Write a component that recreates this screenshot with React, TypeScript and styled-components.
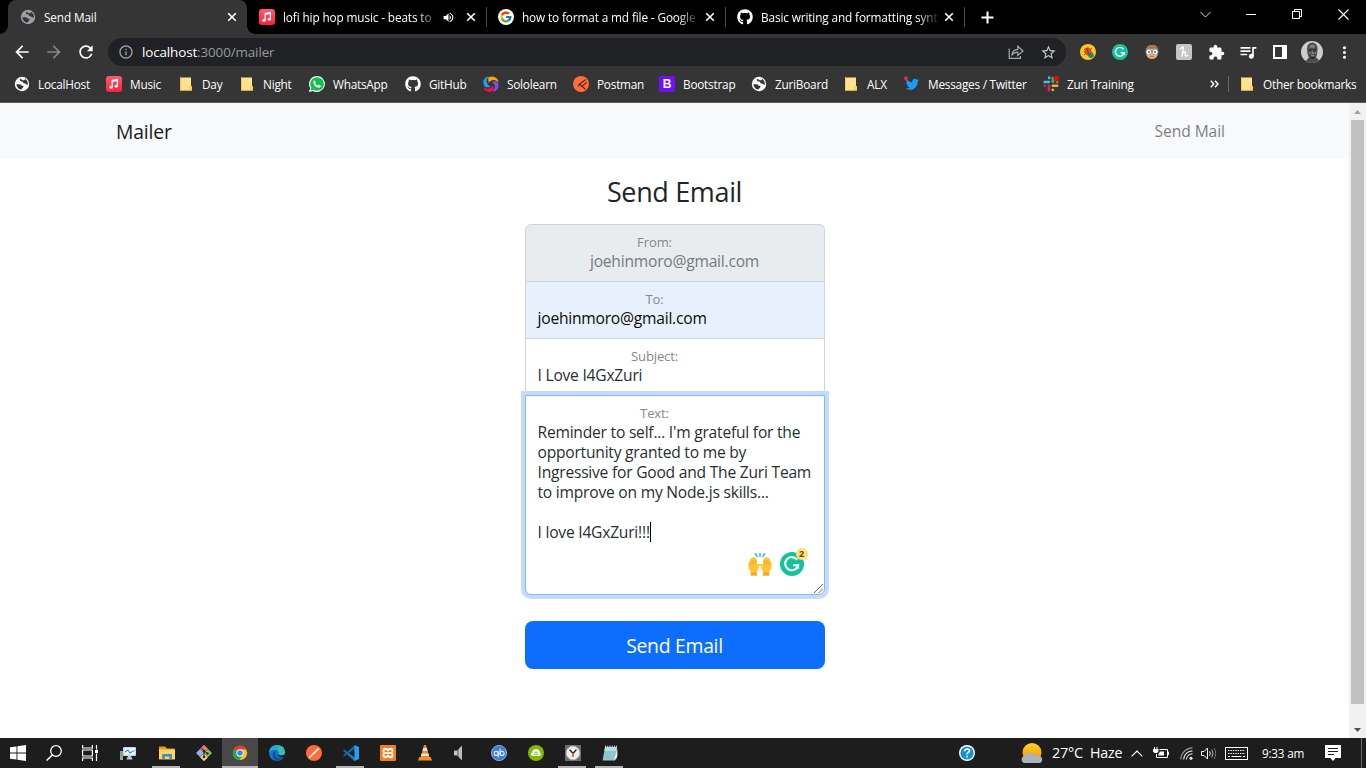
import React from 'react';
import styled, { createGlobalStyle } from 'styled-components';
import { FaGithub, FaTwitter } from 'react-icons/fa';
import { FcGoogle } from 'react-icons/fc';
import {
  MdArrowBack, MdArrowForward, MdRefresh, MdInfoOutline, MdStarBorder, MdExtension,
  MdQueueMusic, MdMoreVert, MdVolumeUp,
} from 'react-icons/md';

const Global = createGlobalStyle`
  * { box-sizing: border-box; }
  html, body { margin: 0; padding: 0; overflow: hidden; background: #fff; }
  body { font-family: "Open Sans", "Noto Sans", sans-serif; }
  svg { display: block; flex: none; }
`;

const Screen = styled.div`
  width: 1366px;
  height: 768px;
  display: flex;
  flex-direction: column;
  overflow: hidden;
`;

/* ---------- browser chrome ---------- */

const TabStrip = styled.div`
  height: 34px;
  flex: none;
  display: flex;
  align-items: stretch;
  background: #000;
  padding-left: 8px;
`;

const Tab = styled.div<{ $active?: boolean; $line?: boolean }>`
  width: 239px;
  display: flex;
  align-items: center;
  padding-left: 12px;
  position: relative;
  color: #fff;
  background: ${p => (p.$active ? '#353535' : 'transparent')};
  border-radius: 8px 8px 0 0;
  ${p => p.$active && `
    &::before, &::after {
      content: '';
      position: absolute;
      bottom: 0;
      width: 8px;
      height: 8px;
    }
    &::before { left: -8px; background: radial-gradient(circle at 0 0, transparent 7.5px, #353535 8px); }
    &::after { right: -8px; background: radial-gradient(circle at 100% 0, transparent 7.5px, #353535 8px); }
  `}
  ${p => p.$line && `
    &::after {
      content: '';
      position: absolute;
      right: -1px;
      top: 7px;
      width: 1px;
      height: 20px;
      background: #4a4a4a;
    }
  `}
`;

const TabTitle = styled.span<{ $w: number; $fade?: boolean }>`
  width: ${p => p.$w}px;
  flex: none;
  margin-left: 8px;
  font-size: 11.8px;
  letter-spacing: -0.13px;
  line-height: 18px;
  white-space: nowrap;
  ${p => p.$fade && 'mask-image: linear-gradient(90deg, #000 calc(100% - 22px), transparent);'}
`;

const TabEnd = styled.span`
  display: flex;
  margin-left: auto;
  margin-right: 10px;
  align-items: center;
  gap: 11px;
`;

const NewTab = styled.div`
  width: 46px;
  display: flex;
  align-items: center;
  justify-content: center;
`;

const WindowButtons = styled.div`
  margin-left: auto;
  display: flex;
  height: 28px;
`;

const WindowButton = styled.div`
  width: 46px;
  display: flex;
  align-items: center;
  justify-content: center;
`;

const Toolbar = styled.div`
  height: 36px;
  flex: none;
  display: flex;
  align-items: center;
  background: #353535;
  color: #fff;
  padding-left: 6px;
`;

const ToolButton = styled.div<{ $dim?: boolean }>`
  width: 32px;
  display: flex;
  justify-content: center;
  color: ${p => (p.$dim ? '#868686' : '#fff')};
`;

const Omnibox = styled.div`
  width: 958px;
  height: 28px;
  margin-left: 6px;
  margin-right: 6px;
  border-radius: 14px;
  background: #202124;
  display: flex;
  align-items: center;
  padding: 0 2px;
  color: #9aa0a6;
`;

const Address = styled.span`
  flex: 1;
  font-size: 13.4px;
  line-height: 20px;
  letter-spacing: -0.11px;
  color: #96999d;
  b { font-weight: 400; color: #fff; }
`;

const Bookmarks = styled.div`
  height: 33px;
  flex: none;
  display: flex;
  align-items: center;
  background: #353535;
  border-bottom: 1px solid #5c5c5c;
  padding-left: 14px;
  padding-bottom: 4px;
  color: #fff;
`;

const Bookmark = styled.div<{ $w: number }>`
  width: ${p => p.$w}px;
  flex: none;
  display: flex;
  align-items: center;
  gap: 8px;
  font-size: 11.8px;
  letter-spacing: -0.23px;
  line-height: 18px;
  white-space: nowrap;
`;

const Overflow = styled.div`
  margin-left: auto;
  display: flex;
  align-items: center;
`;

const Divider = styled.div`
  width: 1px;
  height: 16px;
  margin: 0 10px 0 9px;
  background: #666;
`;

/* ---------- page ---------- */

const Viewport = styled.div`
  flex: 1;
  display: flex;
  min-height: 0;
`;

const Page = styled.main`
  width: 1349px;
  background: #fff;
  display: flex;
  flex-direction: column;
  align-items: center;
`;

const Navbar = styled.nav`
  width: 100%;
  height: 56px;
  flex: none;
  display: flex;
  align-items: center;
  justify-content: space-between;
  padding: 0 124px 0 116px;
  background: #f8f9fb;
`;

const Brand = styled.span`
  font-size: 19.4px;
  line-height: 30px;
  padding-top: 1px;
  letter-spacing: -0.2px;
  color: #1b1c1d;
`;

const NavLink = styled.span`
  font-size: 15.6px;
  line-height: 24px;
  letter-spacing: -0.05px;
  color: #808182;
`;

const Title = styled.h1`
  margin: 16px 0 0;
  height: 34px;
  font-size: 27px;
  letter-spacing: -0.35px;
  font-weight: 400;
  line-height: 33px;
  color: #212529;
`;

const Form = styled.form`
  width: 300px;
  margin-top: 15px;
  display: flex;
  flex-direction: column;
`;

const Field = styled.label<{ $bg?: string; $first?: boolean }>`
  height: 58px;
  margin-bottom: -1px;
  display: flex;
  flex-direction: column;
  border: 1px solid #ced4da;
  border-radius: ${p => (p.$first ? '6px 6px 0 0' : '0')};
  background: ${p => p.$bg ?? '#fff'};
  padding: 8px 12px 0;
`;

const FieldName = styled.span`
  display: block;
  width: 100%;
  padding-right: 40px;
  text-align: center;
  font-size: 13.1px;
  letter-spacing: -0.15px;
  line-height: 18px;
  color: #85888b;
`;

const Value = styled.span<{ $color?: string; $center?: boolean }>`
  font-size: 15.6px;
  line-height: 20px;
  text-align: ${p => (p.$center ? 'center' : 'left')};
  letter-spacing: -0.22px;
  white-space: nowrap;
  color: ${p => p.$color ?? '#2a2e32'};
`;

const TextArea = styled.div`
  position: relative;
  height: 200px;
  padding: 8px 12px 0;
  display: flex;
  flex-direction: column;
  background: #fff;
  border: 1px solid #86b7fe;
  border-radius: 0 0 6px 6px;
  box-shadow: 0 0 0 4px #c2dbff;
`;

const Caret = styled.i`
  display: inline-block;
  width: 1px;
  height: 20px;
  background: #000;
  vertical-align: top;
`;

const Assist = styled.div`
  position: absolute;
  right: 20px;
  bottom: 18px;
  display: flex;
  gap: 8px;
`;

const Grip = styled.div`
  position: absolute;
  right: 1px;
  bottom: 1px;
`;

const Submit = styled.button`
  margin-top: 26px;
  height: 48px;
  border: 0;
  border-radius: 8px;
  background: #0d6efd;
  color: #fff;
  font-family: inherit;
  font-size: 19.4px;
  letter-spacing: -0.3px;
  line-height: 30px;
  padding: 1px 0 0;
`;

const Scrollbar = styled.div`
  width: 17px;
  display: flex;
  flex-direction: column;
  align-items: center;
  background: #f1f1f1;
`;

const ScrollArrow = styled.div`
  height: 17px;
  display: flex;
  align-items: center;
`;

const Thumb = styled.div`
  width: 13px;
  height: 584px;
  margin-bottom: auto;
  background: #c1c1c1;
`;

/* ---------- taskbar ---------- */

const Taskbar = styled.div`
  height: 30px;
  flex: none;
  display: flex;
  align-items: stretch;
  background: #1d1d1d;
  color: #fff;
`;

const Task = styled.div<{ $w?: number; $open?: boolean; $active?: boolean }>`
  width: ${p => p.$w ?? 37}px;
  display: flex;
  align-items: center;
  justify-content: center;
  position: relative;
  background: ${p => (p.$active ? '#484848' : 'transparent')};
  ${p => (p.$open || p.$active) && `
    &::after {
      content: '';
      position: absolute;
      bottom: 0;
      height: 2px;
      left: ${p.$active ? 0 : 4}px;
      right: ${p.$active ? 0 : 5}px;
      background: #b4b4b4;
    }
  `}
`;

const Tray = styled.div`
  margin-left: auto;
  width: 407px;
  display: flex;
  align-items: center;
`;

const Slot = styled.div<{ $w: number; $size?: number }>`
  width: ${p => p.$w}px;
  flex: none;
  display: flex;
  align-items: center;
  font-size: ${p => p.$size ?? 14}px;
  letter-spacing: -0.2px;
  line-height: 20px;
  white-space: nowrap;
`;

/* ---------- drawings ---------- */

const Globe = ({ color, bg }: { color: string; bg: string }) => (
  <svg width="16" height="16" viewBox="0 0 16 16">
    <circle cx="8" cy="8" r="7.2" fill={color} />
    <path d="M2.2 8.2 H5.6 Q7.6 8.4 7.6 9.8 H9.4 V11 L7.4 13.6 Q3.2 13.2 2.2 8.2Z M6.6 2.6 Q5.2 5 7.2 5.4 H8.6 Q8.8 7.2 11 7.6 L13.8 9 Q14.4 5 11.2 3 L10.4 4.2 H8.6Z" fill={bg} />
  </svg>
);

const MusicIcon = () => (
  <svg width="16" height="16" viewBox="0 0 16 16">
    <defs><linearGradient id="mus" x1="0" y1="0" x2="0" y2="1"><stop offset="0" stopColor="#fb5c74" /><stop offset="1" stopColor="#fa233b" /></linearGradient></defs>
    <rect width="16" height="16" rx="3" fill="url(#mus)" />
    <path d="M6.2 11.2 V4.6 L11.4 3.4 V10.2" fill="none" stroke="#fff" strokeWidth="1.2" />
    <path d="M6.2 4.3 L11.5 3.2 V5 L6.2 6.1Z" fill="#fff" />
    <ellipse cx="5.1" cy="11.4" rx="1.7" ry="1.4" fill="#fff" />
    <ellipse cx="10.3" cy="10.3" rx="1.7" ry="1.4" fill="#fff" />
  </svg>
);

const Folder = () => (
  <svg width="16" height="16" viewBox="0 0 16 16">
    <path d="M2 1.5 H13 V10 H14 V14.5 H2Z" fill="#ffe391" />
    <path d="M2.5 1 V14 M2 14.3 H14 M11.8 14 V10.6 H13.6 V14" fill="none" stroke="#e8bf45" strokeWidth="0.8" />
  </svg>
);

const GoogleDot = () => (
  <svg width="16" height="16" viewBox="0 0 16 16">
    <circle cx="8" cy="8" r="8" fill="#fff" />
    <FcGoogle x="1.5" y="1.5" size={13} />
  </svg>
);

const Whats = () => (
  <svg width="16" height="16" viewBox="0 0 16 16">
    <path d="M8 0 A8 8 0 1 1 4 15 L0 16 L1.1 12 A8 8 0 0 1 8 0Z" fill="#fff" />
    <path d="M8 1.2 A6.8 6.8 0 1 1 4.4 13.7 L1.7 14.4 L2.4 11.8 A6.8 6.8 0 0 1 8 1.2Z" fill="#12c04f" />
    <path d="M5.6 4.2 L6.8 6.4 Q5.8 7.2 6.4 7.8 Q7.6 9.4 8.8 9.6 L9.8 8.8 L11.8 9.8 Q11.8 11.6 10 11.7 Q5 11 4.2 6.2 Q4.2 4.6 5.6 4.2Z" fill="#fff" />
  </svg>
);

const Sololearn = () => (
  <svg width="16" height="16" viewBox="0 0 16 16">
    <path d="M5.4 1.6 Q9.6 -1 13.4 2 Q15.6 3.8 15.6 6.4 Q12 2.8 8.4 4.6 Q6.4 5.6 6 7 Q4.8 4.2 5.4 1.6Z" fill="#ffa20d" />
    <path d="M14 5.4 Q17 9.6 14.6 13 Q12.6 15.8 9.8 15.8 Q13.2 11.6 11.4 8.6 Q10.4 7 9 6.4 Q11.6 4.6 14 5.4Z" fill="#7a52e0" />
    <path d="M.4 11.4 Q4.2 13.4 7.2 12.2 Q9.2 11.2 9.6 9.4 Q11.6 12 10.6 14.6 Q7 17 3.2 15 Q.8 13.6 .4 11.4Z" fill="#f60a50" />
    <path d="M6 .2 Q2.4 4.2 4.4 7.8 Q5.4 9.8 7.6 10.4 Q4.6 12.2 1.6 10.4 Q-.6 6.6 .8 3.4 Q2.6 .4 6 .2Z" fill="#1ca0f2" />
  </svg>
);

const PostmanDark = () => (
  <svg width="16" height="16" viewBox="0 0 16 16">
    <circle cx="8" cy="8" r="8" fill="#ff6c37" />
    <path d="M12.8 3.4 L6.6 8 L9 10.4 L13.6 6.4 M6.6 8 L5.2 10.4 M9 10.4 L12.6 13.4" stroke="#4a2c22" strokeWidth="1.2" fill="none" />
  </svg>
);

const BootstrapMark = styled.span`
  width: 16px;
  height: 16px;
  flex: none;
  border-radius: 2px;
  background: #7010f5;
  color: #fff;
  font: 700 12px/16px "Liberation Sans", sans-serif;
  text-align: center;
`;

const TwitterDot = () => (
  <svg width="16" height="16" viewBox="0 0 16 16">
    <FaTwitter x="1.6" y="1.6" size={13.5} color="#1d9bf0" />
    <circle cx="2" cy="2.2" r="2" fill="#e0245e" />
  </svg>
);

const SlackDot = () => (
  <svg width="16" height="16" viewBox="0 0 16 16" strokeLinecap="round" strokeWidth="2.6" fill="none">
    <path d="M1.6 6 H6 M6.2 1.6 V2" stroke="#36c5f0" />
    <path d="M9.8 2 V6 M14 6 H14.2" stroke="#2eb67d" />
    <path d="M1.8 9.8 H2 M6 9.8 V14.2" stroke="#e01e5a" />
    <path d="M9.8 9.8 H14.2 M9.8 13.8 V14" stroke="#ecb22e" />
    <circle cx="13.2" cy="2.8" r="2.8" fill="#ff0000" />
  </svg>
);

const Close = () => (
  <svg width="10" height="10" viewBox="0 0 10 10"><path d="M1.2 1.2 L8.8 8.8 M8.8 1.2 L1.2 8.8" stroke="#fff" strokeWidth="1.6" /></svg>
);

const Share = () => (
  <svg width="16" height="16" viewBox="0 0 16 16" fill="none" stroke="#a4a7ab" strokeWidth="1.2">
    <path d="M1.2 4.5 V14.4 H12.4 V12" /><path d="M4 11 Q4.4 5.6 9.8 5.4 V2.2 L15 7 L9.8 11.4 V8.2 Q6 8.2 4 11Z" />
  </svg>
);

const Bug = () => (
  <svg width="16" height="16" viewBox="0 0 16 16">
    <circle cx="8" cy="8" r="8" fill="#fbc828" />
    <path d="M4 5 L12 11 M4 11 L12 4 M3.6 8 H12" stroke="#5a3a20" strokeWidth="0.8" />
    <ellipse cx="8" cy="7.6" rx="3.2" ry="4.4" fill="#e04a25" transform="rotate(-20 8 7.6)" />
    <path d="M7 4 L9 11" stroke="#7a2a18" strokeWidth="0.7" /><circle cx="11" cy="11.2" r="2.7" fill="#198a67" />
  </svg>
);

const GMark = ({ size }: { size: number }) => (
  <svg width={size} height={size} viewBox="0 0 24 24">
    <circle cx="12" cy="12" r="12" fill="#15c39a" />
    <path d="M17.2 7.9 A6.6 6.6 0 1 0 18.2 13.2 H13.2" fill="none" stroke="#fff" strokeWidth="2.1" />
    <path d="M14.6 12.6 H19 V17.2Z" fill="#fff" />
  </svg>
);

const Face = () => (
  <svg width="16" height="16" viewBox="0 0 16 16">
    <path d="M2 8 Q2 1 8 1 Q14 1 14 8 Q14 15 8 15 Q2 15 2 8Z" fill="#f0ae7f" />
    <path d="M1.6 6.6 Q2 .8 8.4 1 Q14.4 1 14.4 6.6 L11 4.6 Q8 5.4 5 4.4Z" fill="#a87547" />
    <path d="M.6 6.6 H15.4 V8.6 H.6Z" fill="#46545e" />
    <circle cx="4.8" cy="8" r="2.8" fill="#f2f8fb" stroke="#6c8290" strokeWidth=".6" /><circle cx="11.2" cy="8" r="2.8" fill="#f2f8fb" stroke="#6c8290" strokeWidth=".6" />
    <circle cx="5" cy="8" r="1.1" fill="#3f7ea8" /><circle cx="11" cy="8" r="1.1" fill="#3f7ea8" />
    <path d="M6 12.3 H10" stroke="#a4523a" strokeWidth=".8" />
  </svg>
);

const Honey = () => (
  <svg width="16" height="16" viewBox="0 0 16 16">
    <rect width="16" height="16" rx="2" fill="#c5c5c5" />
    <path d="M4 5.4 Q6.4 2 7.4 3.4 Q7.2 7 5.8 12.6 M6.4 9.6 Q9 6.8 9.6 8.6 Q8.6 11.6 9.8 12.2 Q11 12.2 12 10.8" fill="none" stroke="#fff" strokeWidth="1.3" />
  </svg>
);

const Avatar = () => (
  <svg width="22" height="22" viewBox="0 0 22 22">
    <defs><clipPath id="av"><circle cx="11" cy="11" r="11" /></clipPath></defs>
    <g clipPath="url(#av)">
      <rect width="22" height="22" fill="#cdcdcd" />
      <path d="M3 22 L7.4 17 L16 17 L20 22Z" fill="#4c4c4c" />
      <path d="M6 8 Q6 1.5 11.5 1.5 Q17 2 16.5 9 Q16.5 14 14.5 18 L10.5 20 L8 17 Q6 13 6 8Z" fill="#4e4e4e" />
      <path d="M8.2 5.2 Q11 2.4 14 4.6 L13.4 6.8 H9Z" fill="#858585" />
      <path d="M7.8 9 H10.6 M12.4 9 H15" stroke="#1a1a1a" strokeWidth="1.2" />
      <path d="M8 11.5 L9.6 13 M11 10 L11.2 12.4 H13 M15 11 L14.2 12.6" stroke="#9a9a9a" fill="none" />
      <path d="M8.8 14.4 Q11.5 13.4 14.4 14.4 L13.4 17.4 H10Z" fill="#1c1c1c" /><path d="M9.8 14.9 H13.6" stroke="#dcdcdc" strokeWidth=".9" />
    </g>
  </svg>
);

const Hands = () => (
  <svg width="24" height="24" viewBox="0 0 24 24">
    <path d="M12 1.4 V4.6 M7.4 1.6 L9.2 4.6 M16.6 1.6 L14.8 4.6" stroke="#3fb6e0" strokeWidth="1.5" strokeLinecap="round" />
    <g id="hand">
      <path d="M2.8 23.6 V20 Q.2 17 .2 12.6 Q.4 10 1.6 10.4 Q1.6 6.6 3.1 6.8 Q3.8 4.6 5.1 5.6 Q6.7 4.6 7.3 6.6 Q8.8 6.2 8.9 8.4 V13 Q9.9 11.6 11.7 12 Q12 13 11 14.6 Q10.4 18.2 8.8 19.8 V23.6Z" fill="#ffc430" />
      <path d="M2.9 9 V13 M5.1 8 V12.4 M7.2 8.4 V12.6" stroke="#e59a1a" strokeWidth=".6" />
      <path d="M2.9 20.4 H8.8 V23.6 H2.9Z" fill="#f3a81f" />
    </g>
    <use href="#hand" transform="matrix(-1 0 0 1 24 0)" />
  </svg>
);

const Grammar = styled.div`
  position: relative;
`;

const Count = styled.span`
  position: absolute;
  top: -4px;
  right: -4px;
  width: 12px;
  height: 12px;
  border-radius: 6px;
  background: #ffdc7c;
  color: #6b4a10;
  font: 700 9px/12px "Open Sans", sans-serif;
  text-align: center;
`;

const Glyph = ({ children }: { children: React.ReactNode }) => (
  <svg width="16" height="16" viewBox="0 0 16 16">{children}</svg>
);

const bookmarks: [string, number, React.ReactNode][] = [
  ['LocalHost', 92, <Globe color="#fff" bg="#353535" />],
  ['Music', 72, <MusicIcon />],
  ['Day', 61, <Folder />],
  ['Night', 70, <Folder />],
  ['WhatsApp', 96, <Whats />],
  ['GitHub', 78, <FaGithub size={16} />],
  ['Sololearn', 90, <Sololearn />],
  ['Postman', 86, <PostmanDark />],
  ['Bootstrap', 92, <BootstrapMark>B</BootstrapMark>],
  ['ZuriBoard', 92, <Globe color="#fff" bg="#353535" />],
  ['ALX', 61, <Folder />],
  ['Messages / Twitter', 139, <TwitterDot />],
  ['Zuri Training', 100, <SlackDot />],
];

export default function App() {
  return (
    <Screen>
      <Global />
      <TabStrip>
        <Tab $active>
          <Globe color="#9aa0a6" bg="#353535" />
          <TabTitle $w={160}>Send Mail</TabTitle>
          <TabEnd><Close /></TabEnd>
        </Tab>
        <Tab $line>
          <MusicIcon />
          <TabTitle $w={156} $fade>lofi hip hop music - beats to</TabTitle>
          <TabEnd><MdVolumeUp size={13} /><Close /></TabEnd>
        </Tab>
        <Tab $line>
          <GoogleDot />
          <TabTitle $w={178} $fade>how to format a md file - Google</TabTitle>
          <TabEnd><Close /></TabEnd>
        </Tab>
        <Tab $line>
          <FaGithub size={16} />
          <TabTitle $w={179} $fade>Basic writing and formatting synt</TabTitle>
          <TabEnd><Close /></TabEnd>
        </Tab>
        <NewTab><svg width="13" height="13" viewBox="0 0 13 13"><path d="M6.5 .5 V12.5 M.5 6.5 H12.5" stroke="#fff" strokeWidth="2" /></svg></NewTab>
        <WindowButtons>
          <WindowButton><svg width="11" height="11" viewBox="0 0 11 11"><path d="M.5 3 L5.5 8 L10.5 3" fill="none" stroke="#ddd" /></svg></WindowButton>
          <WindowButton><svg width="10" height="10" viewBox="0 0 10 10"><path d="M0 5.5 H10" stroke="#fff" /></svg></WindowButton>
          <WindowButton><svg width="10" height="10" viewBox="0 0 10 10"><path d="M.5 2.5 H7.5 V9.5 H.5Z M2.5 2.5 V.5 H9.5 V7.5 H7.5" fill="none" stroke="#fff" /></svg></WindowButton>
          <WindowButton><svg width="11" height="11" viewBox="0 0 11 11"><path d="M.5 .5 L10.5 10.5 M10.5 .5 L.5 10.5" stroke="#fff" strokeWidth="1.1" /></svg></WindowButton>
        </WindowButtons>
      </TabStrip>

      <Toolbar>
        <ToolButton><MdArrowBack size={20} /></ToolButton>
        <ToolButton $dim><MdArrowForward size={20} /></ToolButton>
        <ToolButton><MdRefresh size={20} /></ToolButton>
        <Omnibox>
          <ToolButton $dim><MdInfoOutline size={16} color="#9aa0a6" /></ToolButton>
          <Address><b>localhost</b>:3000/mailer</Address>
          <ToolButton><Share /></ToolButton>
          <ToolButton><MdStarBorder size={17} color="#c4c6c9" /></ToolButton>
        </Omnibox>
        <ToolButton><Bug /></ToolButton>
        <ToolButton><GMark size={16} /></ToolButton>
        <ToolButton><Face /></ToolButton>
        <ToolButton><Honey /></ToolButton>
        <ToolButton><MdExtension size={17} /></ToolButton>
        <ToolButton><MdQueueMusic size={20} /></ToolButton>
        <ToolButton><svg width="14" height="14" viewBox="0 0 14 14"><path d="M1 1 H13 V13 H1Z" fill="none" stroke="#fff" strokeWidth="2" /><rect x="9" y="1" width="4" height="12" fill="#fff" /></svg></ToolButton>
        <ToolButton><Avatar /></ToolButton>
        <ToolButton><MdMoreVert size={19} /></ToolButton>
      </Toolbar>

      <Bookmarks>
        {bookmarks.map(([name, w, icon]) => (
          <Bookmark key={name} $w={w}>{icon}{name}</Bookmark>
        ))}
        <Overflow>
          <svg width="9" height="8" viewBox="0 0 9 8"><path d="M.8 .8 L3.8 4 L.8 7.2 M5 .8 L8 4 L5 7.2" fill="none" stroke="#fff" strokeWidth="1.4" /></svg>
          <Divider />
          <Bookmark $w={127}><Folder />Other bookmarks</Bookmark>
        </Overflow>
      </Bookmarks>

      <Viewport>
        <Page>
          <Navbar><Brand>Mailer</Brand><NavLink>Send Mail</NavLink></Navbar>
          <Title>Send Email</Title>
          <Form>
            <Field $first $bg="#e9ecef"><FieldName>From:</FieldName><Value $center $color="#727a82">joehinmoro@gmail.com</Value></Field>
            <Field $bg="#e8f0fe"><FieldName>To:</FieldName><Value $color="#0a0a0a">joehinmoro@gmail.com</Value></Field>
            <Field><FieldName>Subject:</FieldName><Value>I Love I4GxZuri</Value></Field>
            <TextArea>
              <FieldName>Text:</FieldName>
              <Value>Reminder to self... I'm grateful for the</Value>
              <Value>opportunity granted to me by</Value>
              <Value>Ingressive for Good and The Zuri Team</Value>
              <Value>to improve on my Node.js skills...</Value>
              <Value>&nbsp;</Value>
              <Value>I love I4GxZuri!!!<Caret /></Value>
              <Assist><Hands /><Grammar><GMark size={24} /><Count>2</Count></Grammar></Assist>
              <Grip><svg width="9" height="9" viewBox="0 0 9 9"><path d="M0 9 L9 0 M4.6 9 L9 4.6" stroke="#555" strokeWidth=".9" /></svg></Grip>
            </TextArea>
            <Submit type="button">Send Email</Submit>
          </Form>
        </Page>
        <Scrollbar>
          <ScrollArrow><svg width="7" height="4" viewBox="0 0 7 4"><path d="M0 4 L3.5 0 L7 4Z" fill="#a3a3a3" /></svg></ScrollArrow>
          <Thumb />
          <ScrollArrow><svg width="7" height="4" viewBox="0 0 7 4"><path d="M0 0 L3.5 4 L7 0Z" fill="#505050" /></svg></ScrollArrow>
        </Scrollbar>
      </Viewport>

      <Taskbar>
        <Task $w={36}><Glyph><path d="M0 2.3 L6.5 1.4 V7.5 H0Z M7.4 1.3 L16 0 V7.5 H7.4Z M0 8.4 H6.5 V14.6 L0 13.7Z M7.4 8.4 H16 V16 L7.4 14.7Z" fill="#fff" /></Glyph></Task>
        <Task $w={36}><Glyph><circle cx="10" cy="6" r="5.3" fill="none" stroke="#fff" strokeWidth="1.3" /><path d="M6.3 10 L.6 15.6" stroke="#fff" strokeWidth="1.4" /></Glyph></Task>
        <Task $w={36}><Glyph><path d="M.6 0 V3 H10.4 V0 M.6 16 V13 H10.4 V16 M.6 5 H10.4 V11 H.6Z M14.5 0 V4.5 M14.5 8.5 V16" fill="none" stroke="#fff" strokeWidth="1.2" /><rect x="13" y="5" width="3" height="3" fill="#fff" /></Glyph></Task>
        <Task $w={40}><Glyph><rect x="3" y="2" width="13" height="9" rx="1" fill="#cfd4d7" /><rect x="4.4" y="3.2" width="10.4" height="6.4" fill="#f4fbff" /><path d="M5 7 L8 5 L10 8 L14.4 5.4" stroke="#2696c4" fill="none" strokeWidth="1.1" /><path d="M0 6 H3 V15 H0Z" fill="#9fa5a3" /><path d="M1 7 H2 V11 H1Z" fill="#4faa50" /><path d="M8 11 H11 L12.6 14.4 H6.4Z" fill="#c3c9cc" /></Glyph></Task>
        <Task $w={37} $open><Glyph><path d="M0 1.5 H6 L8 3.5 H15.5 V8 H0Z" fill="#e69b16" /><rect y="4.4" width="16" height="10" fill="#ffd55c" /><path d="M3.2 14.6 V9 H13 V14.6 H10.4 V11.6 H5.8 V14.6Z" fill="#3a8ed0" /></Glyph></Task>
        <Task $w={37}><Glyph><path d="M8 -.2 L12 3.8 L8 7.8 L4 3.8Z" fill="#ec7a6c" /><path d="M4 4 L8 8 L4 12 L0 8Z" fill="#8db2ee" /><path d="M12 4 L16 8 L12 12 L8 8Z" fill="#7fc763" /><path d="M8 8.2 L12 12.2 L8 16.2 L4 12.2Z" fill="#f0d98a" /><path d="M5 2.6 L8 5.6 V12.6 M8.2 6 L11.4 8.6" stroke="#2a2222" strokeWidth="1" fill="none" /><circle cx="8" cy="6" r="1.2" fill="#2a2222" /><circle cx="8" cy="12" r="1.3" fill="#2a2222" /><circle cx="11.4" cy="8.4" r="1.2" fill="#2a2222" /></Glyph></Task>
        <Task $w={36} $active><Glyph><circle cx="8" cy="8" r="7.2" fill="#fbc116" /><path d="M8 8 L1.8 4.4 A7.2 7.2 0 0 1 14.3 4.6 H8Z" fill="#e33b2e" /><path d="M8 8 L1.8 4.4 A7.2 7.2 0 0 0 7.4 15.2 L11 9.6Z" fill="#1fa553" /><circle cx="8" cy="8" r="3.7" fill="#fff" /><circle cx="8" cy="8" r="2.8" fill="#3f83f0" /></Glyph></Task>
        <Task><Glyph><circle cx="8" cy="8" r="8" fill="#1476c6" /><path d="M.2 7 Q1.4 0 8.6 0 Q15.8 .6 16 7 Q15.8 10.2 12 10.4 Q9.4 10.4 9.6 9 Q10.6 6.2 7.6 5 Q3.2 4.2 .2 7Z" fill="#35c1b0" /><path d="M.2 7 Q1.6 1 7.6 .2 Q11 0 9 5.4 Q4.6 3.2 .2 7Z" fill="#27a5dd" /><path d="M7 6 Q4.4 11 10 13.2 Q12.6 13.8 14.6 12.4 Q12 16.4 7.6 15.8 Q3.6 14 3.6 10 Q4 6.6 7 6Z" fill="#104f9e" /><path d="M9.6 9.4 Q10.2 11 16 10 L15 12.2 Q10.4 13.6 8.4 10Z" fill="#1d1d1d" /></Glyph></Task>
        <Task><Glyph><circle cx="8" cy="8" r="8" fill="#ff6c37" /><path d="M3.2 12.8 L12 4 M4.4 11.6 L13 3.6" stroke="#fff" strokeWidth="1.3" /><path d="M5.2 10 L10 5.2" stroke="#ffd0bd" /></Glyph></Task>
        <Task $open><Glyph><path d="M0 5.6 L1.4 4.8 L12 12.8 V16 L11.2 16Z" fill="#1378bd" /><path d="M0 10.4 L1.4 11.2 L12 3.4 V0Z" fill="#0f69ac" /><path d="M11.4 0 L16 2 V14 L11.4 16Z" fill="#26a0ee" /></Glyph></Task>
        <Task><Glyph><rect width="16" height="16" rx="1" fill="#f08022" /><path d="M4.4 3.6 Q7.6 3.6 8 6 Q8.4 3.6 11.6 3.6 M4.4 12.4 Q7.6 12.4 8 10 Q8.4 12.4 11.6 12.4 M4.4 3.6 Q2.4 5.8 4.4 8 Q2.4 10 4.4 12.4 M11.6 3.6 Q13.6 5.8 11.6 8 Q13.6 10 11.6 12.4 M5 8 H11" stroke="#fff" strokeWidth="1.6" fill="none" /></Glyph></Task>
        <Task><Glyph><path d="M7 0 H9 L12.6 13 H3.4Z" fill="#f58520" /><path d="M6.2 3 H9.8 L10.5 6 H5.4Z M4.6 8.6 H11.4 L12 11 H4Z" fill="#e8e8e8" /><path d="M2.4 12 H13.6 L15 15.4 H1Z" fill="#f39222" /></Glyph></Task>
        <Task><Glyph><path d="M0 5.6 H3 V10.4 H0Z" fill="#c5c5c8" /><path d="M3 5.6 L8 .4 V15.6 L3 10.4Z" fill="#8c8c92" /><path d="M5 4 L8 1 V15 L5 12Z" fill="#c0c0c4" /></Glyph></Task>
        <Task><Glyph><circle cx="8" cy="8" r="7.6" fill="#3e7ed2" stroke="#a7c5ee" strokeWidth=".8" /><g fill="none" stroke="#dcebff" strokeWidth="1.1"><circle cx="5.2" cy="8.4" r="2" /><path d="M7.2 6 V12.6 M9.1 3.4 V10.4" /><circle cx="11.1" cy="8.4" r="2" /></g></Glyph></Task>
        <Task><Glyph><circle cx="8" cy="8" r="8" fill="#80b900" /><path d="M4.4 7.2 Q4.6 4 8 4 Q11.4 4 11.6 7.2 Q13.4 8 12.6 10 Q12 11 11 11 H5 Q3 10.8 3 9 Q3.2 7.4 4.4 7.2Z" fill="#fff" /><path d="M6.4 7.2 H9.6 M6 9.2 H10" stroke="#80b900" strokeWidth="1.1" /></Glyph></Task>
        <Task $open><Glyph><rect width="16" height="16" fill="#656e74" /><circle cx="8" cy="8" r="6.8" fill="#eee" stroke="#b6bcc0" /><path d="M4.6 4.6 L8 8.4 L11.4 4.6" stroke="#1c1c1c" fill="none" strokeWidth="1.4" /><path d="M8 8 V12" stroke="#de5a2b" strokeWidth="1.6" /></Glyph></Task>
        <Task $open><Glyph><path d="M3 2 H15 V13 L13 15.4 H0.6Z" fill="#8fc5cb" /><path d="M3 2 H15 L14 6 H2.4Z" fill="#b8dfe2" /><path d="M12 15.4 L15.4 11 V4 L12.6 13Z" fill="#f2f5ee" /><path d="M3.6 .6 V3 M5.8 .6 V3 M8 .6 V3 M10.2 .6 V3 M12.4 .6 V3 M14.4 .6 V3" stroke="#d4dad8" strokeWidth="1" /></Glyph></Task>
        <Tray>
          <Slot $w={62}><Glyph><circle cx="8" cy="8" r="8" fill="#fff" /><circle cx="8" cy="8" r="6.6" fill="#1591d2" /><path d="M5.6 6.2 Q5.8 4 8.2 4 Q10.6 4.2 10.4 6.2 Q10.2 7.2 9 7.8 Q8 8.4 8 9.6 M8 10.8 V12.6" stroke="#fff" strokeWidth="1.6" fill="none" /></Glyph></Slot>
          <Slot $w={31}><svg width="22" height="20" viewBox="0 0 22 20"><defs><linearGradient id="sun" x1="0" y1="0" x2="0" y2="1"><stop offset="0" stopColor="#ffd21c" /><stop offset="1" stopColor="#f98a12" /></linearGradient></defs><circle cx="11" cy="9.5" r="9.5" fill="url(#sun)" /><path d="M5 20 Q.6 20 .6 16.4 Q.8 13 4.4 13 Q5.8 9.8 9.6 9.8 Q13 9.8 14.2 12.4 Q20.8 12 21.2 16.4 Q21 20 17.4 20Z" fill="#a9b3bd" /></svg></Slot>
          <Slot $w={38} $size={14.4}>27°C</Slot>
          <Slot $w={41} $size={14.2}>Haze</Slot>
          <Slot $w={22}><svg width="12" height="7" viewBox="0 0 12 7"><path d="M.6 6.4 L6 1 L11.4 6.4" fill="none" stroke="#fff" strokeWidth="1.2" /></svg></Slot>
          <Slot $w={27}><svg width="16" height="12" viewBox="0 0 16 12"><path d="M6.5 2.5 H14.5 V10.5 H3.5 V7 M14.5 5 H15.6 V8" fill="none" stroke="#fff" /><path d="M7 4.4 H11 V8.6 H5.4V7Z" fill="#fff" /><path d="M0 2 H5.5 V4.4 L4 6 H1.5 L0 4.4Z M1 0 H2 V2 H1Z M3.5 0 H4.5 V2 H3.5Z" fill="#fff" /></svg></Slot>
          <Slot $w={21}><svg width="13" height="13" viewBox="0 0 13 13" fill="none" stroke="#e6e6e6" strokeWidth="1.1"><path d="M.8 12.5 A12 12 0 0 1 12.5 .9" stroke="#9b9b9b" /><path d="M3.6 12.5 A9 9 0 0 1 12.5 3.9" /><path d="M6.4 12.5 A6.4 6.4 0 0 1 12.5 6.7" /><circle cx="11" cy="11.2" r="1.5" fill="#fff" stroke="none" /></svg></Slot>
          <Slot $w={24}><svg width="17" height="13" viewBox="0 0 17 13" fill="none"><path d="M.5 4.5 H3 L6.5 1 V12 L3 8.5 H.5Z" stroke="#fff" /><path d="M8.6 4.4 Q10 6.5 8.6 8.6" stroke="#fff" /><path d="M10.8 2.6 Q13.2 6.5 10.8 10.4" stroke="#bbb" /><path d="M13 1 Q16.4 6.5 13 12" stroke="#777" /></svg></Slot>
          <Slot $w={37}><svg width="23" height="13" viewBox="0 0 23 13" fill="none" stroke="#fff"><rect x=".5" y=".5" width="22" height="12" /><path d="M3 3.5 H20 M3 6.5 H20" strokeDasharray="1.4 1" /><path d="M3 9.5 H5 M6.5 9.5 H16.5 M18 9.5 H20" /></svg></Slot>
          <Slot $w={63} $size={11.7}>9:33 am</Slot>
          <Slot $w={36}><svg width="16" height="16" viewBox="0 0 16 16"><path d="M0 0 H16 V13 H10.6 L8 16 L5.4 13 H0Z" fill="#fff" /><path d="M3 3.5 H13 M3 6.5 H13 M3 9.5 H9" stroke="#1d1d1d" /></svg></Slot>
          <Slot $w={1}><svg width="1" height="30" viewBox="0 0 1 30"><rect width="1" height="30" fill="#6a6a6a" /></svg></Slot>
        </Tray>
      </Taskbar>
    </Screen>
  );
}
